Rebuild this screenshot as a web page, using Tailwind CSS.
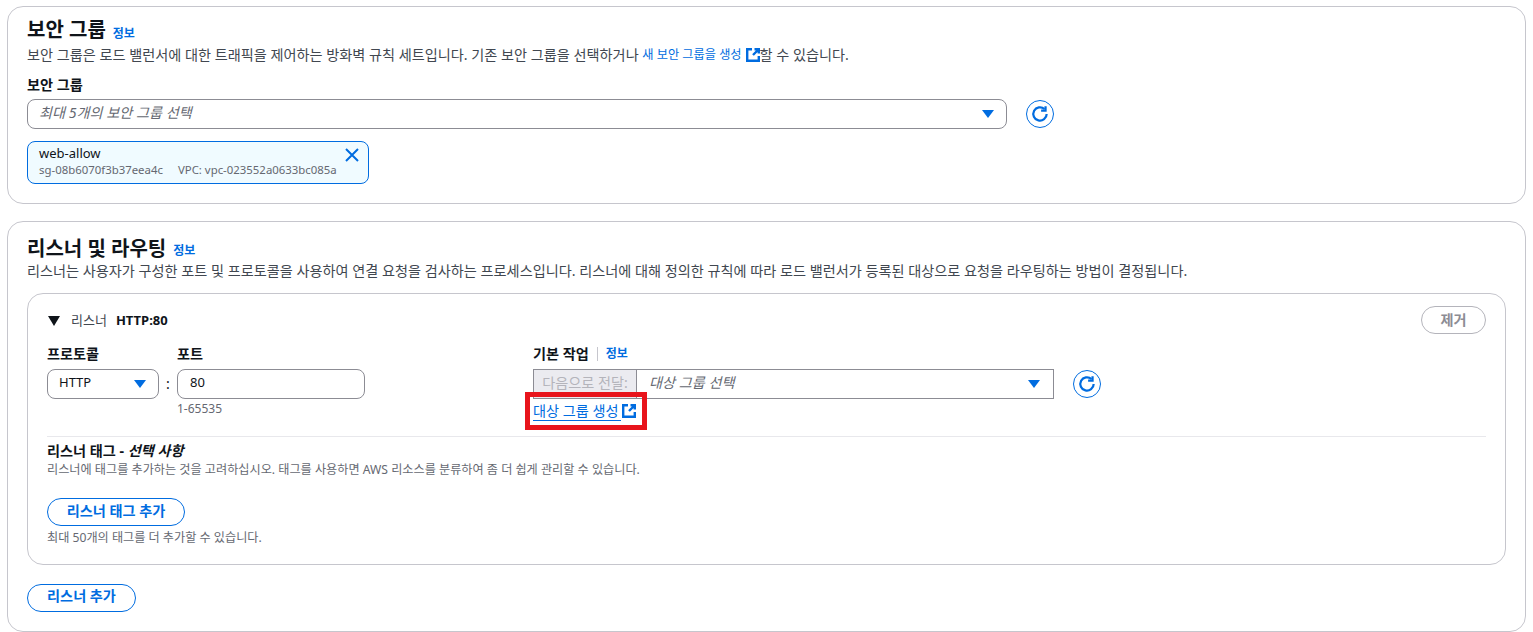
<!DOCTYPE html>
<html lang="ko">
  <head>
    <meta charset="UTF-8" />
    <meta name="viewport" content="width=device-width, initial-scale=1.0" />
    <title>리스너 및 라우팅</title>
    <script src="https://cdn.jsdelivr.net/npm/@tailwindcss/browser@4"></script>
  </head>
  <body class="bg-white text-[#0f141a] text-[14.17px] h-[632px] overflow-hidden font-['Noto_Sans','Noto_Sans_CJK_KR',sans-serif]">
    <div class="px-[7px] pt-[6px]">
      <!-- security group -->
      <section class="h-[198px] border border-[#c6c6cd] rounded-2xl px-[19px] pt-[9px]">
        <div class="flex items-center h-[28px] gap-[7px]">
          <h2 class="text-[20px] leading-[28px] font-bold">보안 그룹</h2>
          <a class="text-[12px] font-bold text-[#006ce0] mt-[7px]">정보</a>
        </div>
        <p class="leading-[18px] mt-[2px] text-[#414750] flex items-center">
          보안 그룹은 로드 밸런서에 대한 트래픽을 제어하는 방화벽 규칙 세트입니다. 기존 보안 그룹을 선택하거나&nbsp;
          <a class="text-[12.2px] text-[#006ce0]">새 보안 그룹을 생성</a>
          <svg class="w-[14px] h-[14px] ml-[4px] text-[#006ce0]" viewBox="0 0 14 14" fill="none" stroke="currentColor" stroke-width="2.4"><path d="M6 1.2H1.2v11.6h11.6V8" /><path d="M8.5 1.2h4.3v4.3M12.5 1.5 7 7" /></svg>
          할 수 있습니다.
        </p>
        <label class="block font-bold leading-[18px] mt-[12px]">보안 그룹</label>
        <div class="flex items-center mt-[5px]">
          <div class="w-[980px] h-[30px] border border-[#8c8c94] rounded-lg flex items-center justify-between pl-[11px] pr-[12px]">
            <span class="italic text-[#656871] pb-[2px]">최대 5개의 보안 그룹 선택</span>
            <svg class="w-3 h-2" viewBox="0 0 12 8" fill="#006ce0"><path d="M0 0h12L6 8z" /></svg>
          </div>
          <button class="ml-[19px] w-7 h-7 border border-[#006ce0] rounded-full flex items-center justify-center">
            <svg class="w-[20px] h-[20px]" viewBox="0 0 18 18" fill="none" stroke="#006ce0" stroke-width="2"><path d="M15 9a6 6 0 1 1-2-4.5" /><path d="M14 2v4h-4" /></svg>
          </button>
        </div>
        <div class="mt-3 w-[342px] h-[43px] border border-[#006ce0] rounded-lg bg-[#f0fbff] pl-[11px] pr-2 pt-[2px] relative">
          <div class="text-[13px] leading-[18px]">web-allow</div>
          <div class="text-[11.4px] leading-[16px] text-[#656871] flex gap-[15px]"><span>sg-08b6070f3b37eea4c</span><span>VPC: vpc-023552a0633bc085a</span></div>
          <svg class="absolute right-[9px] top-[6px] w-[14px] h-[14px]" viewBox="0 0 14 14" fill="none" stroke="#006ce0" stroke-width="2"><path d="m1 1 12 12M13 1 1 13" /></svg>
        </div>
      </section>

      <!-- listeners and routing -->
      <section class="h-[411px] mt-[17px] border border-[#c6c6cd] rounded-2xl px-[19px] pt-[13px]">
        <div class="flex items-center h-[28px] gap-[7px]">
          <h2 class="text-[20px] leading-[28px] font-bold">리스너 및 라우팅</h2>
          <a class="text-[12px] font-bold text-[#006ce0] mt-[4px]">정보</a>
        </div>
        <p class="leading-[18px] mt-[-1px] text-[#414750]">리스너는 사용자가 구성한 포트 및 프로토콜을 사용하여 연결 요청을 검사하는 프로세스입니다. 리스너에 대해 정의한 규칙에 따라 로드 밸런서가 등록된 대상으로 요청을 라우팅하는 방법이 결정됩니다.</p>
        <div class="mt-[13px] h-[272px] border border-[#c6c6cd] rounded-2xl px-[19px] pt-3">
          <div class="flex items-center justify-between h-7">
            <div class="flex items-center pt-[2px]">
              <svg class="w-[14px] h-[10px] mr-[10px]" viewBox="0 0 14 10" fill="#0f141a"><path d="M1 0h12L7 10z" /></svg>
              <span class="text-[#414750] text-[13px]">리스너</span>
              <span class="font-bold text-[13px] ml-[9px]">HTTP:80</span>
            </div>
            <button class="w-[65px] h-7 border border-[#b4b4bb] rounded-full text-[#8c8c94] font-bold">제거</button>
          </div>
          <div class="flex mt-[11px]">
            <div class="w-[486px] flex">
              <div class="w-[112px]">
                <label class="block font-bold leading-[18px]">프로토콜</label>
                <div class="mt-[6px] h-[30px] border border-[#8c8c94] rounded-lg flex items-center justify-between pl-[11px] pr-[12px] text-[13px]">
                  <span class="pb-[2px]">HTTP</span>
                  <svg class="w-3 h-2" viewBox="0 0 12 8" fill="#006ce0"><path d="M0 0h12L6 8z" /></svg>
                </div>
              </div>
              <span class="w-[18px] mt-[24px] text-center leading-[30px]">:</span>
              <div class="w-[188px]">
                <label class="block font-bold leading-[18px]">포트</label>
                <div class="mt-[6px] h-[30px] border border-[#8c8c94] rounded-lg flex items-center pl-3 pb-[3px] text-[13px]">80</div>
                <div class="text-[12px] leading-[16px] mt-[2px] text-[#656871]">1-65535</div>
              </div>
            </div>
            <div>
              <div class="flex items-center h-[18px]">
                <label class="font-bold">기본 작업</label>
                <span class="mx-2 h-[14px] border-l border-[#c6c6cd]"></span>
                <a class="text-[12px] font-bold text-[#006ce0]">정보</a>
              </div>
              <div class="flex items-center mt-[6px]">
                <div class="w-[521px] h-[30px] border border-[#8c8c94] flex items-center">
                  <span class="w-[103px] h-full bg-[#ebebf0] border-r border-[#8c8c94] text-[#b4b4bb] flex items-center justify-center pb-[3px] shrink-0">다음으로 전달:</span>
                  <span class="italic text-[#656871] pl-[12px] pb-[3px] grow">대상 그룹 선택</span>
                  <svg class="w-3 h-2 mr-[13px]" viewBox="0 0 12 8" fill="#006ce0"><path d="M0 0h12L6 8z" /></svg>
                </div>
                <button class="ml-[19px] w-7 h-7 border border-[#006ce0] rounded-full flex items-center justify-center">
                  <svg class="w-[20px] h-[20px]" viewBox="0 0 18 18" fill="none" stroke="#006ce0" stroke-width="2"><path d="M15 9a6 6 0 1 1-2-4.5" /><path d="M14 2v4h-4" /></svg>
                </button>
              </div>
              <div class="relative w-fit mt-[3px] flex items-center h-[18px]">
                <a class="text-[#006ce0] border-b border-[#006ce0] leading-[18px] pr-[2px] h-[19px]">대상 그룹 생성</a>
                <svg class="w-[14px] h-[14px] ml-[1px] mr-[1px] text-[#006ce0]" viewBox="0 0 14 14" fill="none" stroke="currentColor" stroke-width="2.4"><path d="M6 1.2H1.2v11.6h11.6V8" /><path d="M8.5 1.2h4.3v4.3M12.5 1.5 7 7" /></svg>
                <div class="absolute left-[-8px] right-[-10px] top-[-10px] bottom-[-10px] border-[5px] border-[#e8141c]"></div>
              </div>
            </div>
          </div>
          <div class="border-t border-[#e8e8ec] mt-[16px] pt-[5px]">
            <div class="font-bold leading-[18px]">리스너 태그 - <i>선택 사항</i></div>
            <p class="text-[12.15px] leading-[16px] mt-[2px] text-[#656871]">리스너에 태그를 추가하는 것을 고려하십시오. 태그를 사용하면 AWS 리소스를 분류하여 좀 더 쉽게 관리할 수 있습니다.</p>
            <button class="mt-[20px] w-[138px] h-7 border border-[#006ce0] rounded-full text-[#006ce0] font-bold block pb-[3px]">리스너 태그 추가</button>
            <p class="text-[12.15px] leading-[16px] mt-[4px] text-[#656871]">최대 50개의 태그를 더 추가할 수 있습니다.</p>
          </div>
        </div>
        <button class="mt-[19px] w-[109px] h-7 border border-[#006ce0] rounded-full text-[#006ce0] font-bold block pb-[5px]">리스너 추가</button>
      </section>
    </div>
  </body>
</html>
